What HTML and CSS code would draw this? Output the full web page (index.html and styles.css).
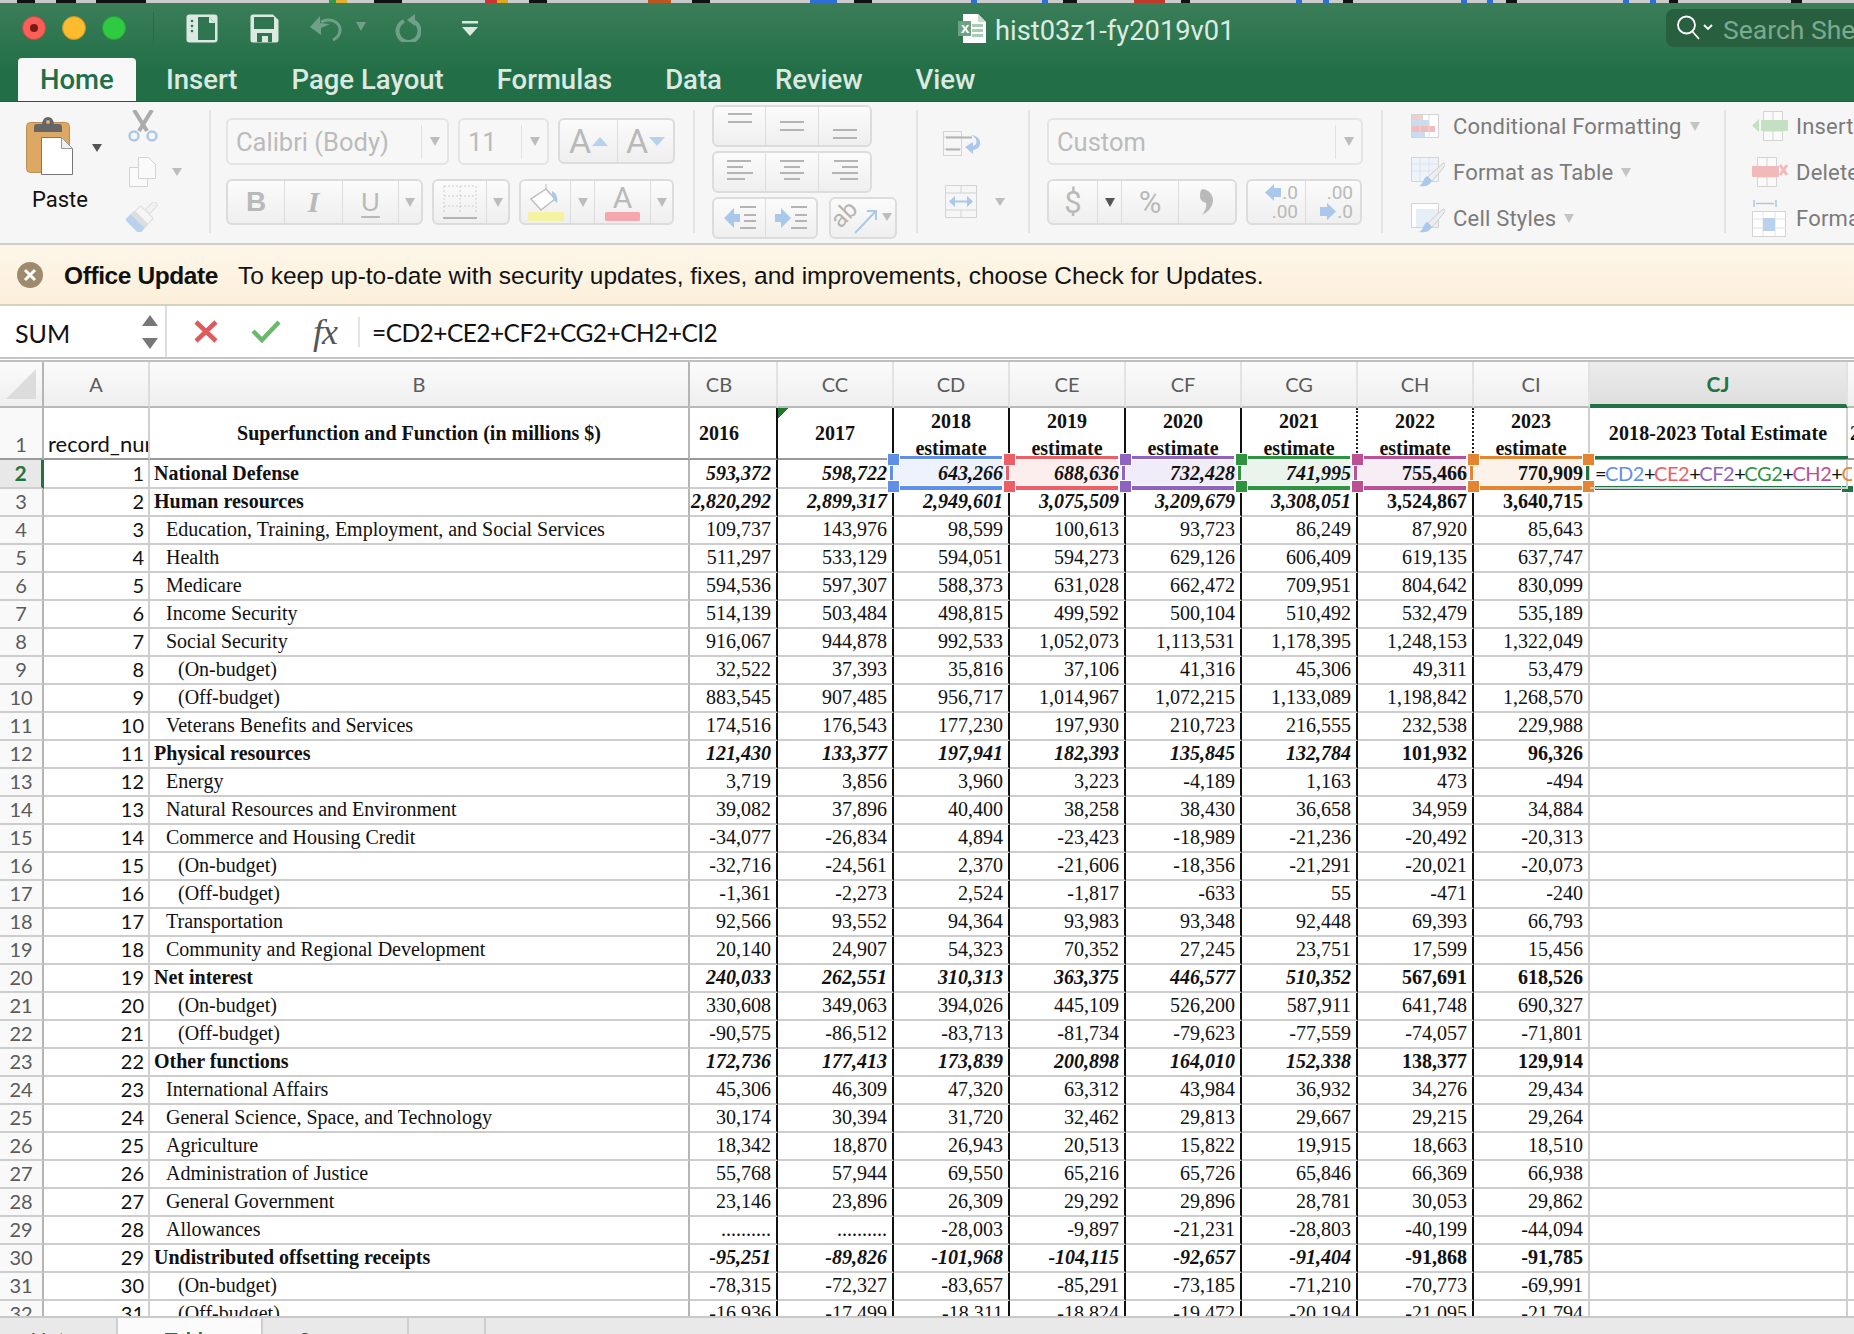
FILE: index.html
```html
<!DOCTYPE html>
<html lang="en">
<head>
<meta charset="utf-8">
<title>hist03z1-fy2019v01</title>
<link rel="stylesheet" href="styles.css">
</head>
<body>
<div class="strip"></div>
<header class="titlebar">
  <div class="toprow">
    <span class="light red"><i></i></span><span class="light yellow"></span><span class="light green"></span>
    <span class="qsep"></span>
    <svg class="q1" width="32" height="29" viewBox="0 0 32 29"><rect x="0.5" y="0.5" width="31" height="28" rx="3" fill="#dbe9e1"/><path d="M12 3h11l6 6v17H12z" fill="#2f7551"/><path d="M23 3v6h6" fill="#dbe9e1"/><circle cx="6" cy="7" r="1.3" fill="#2f7551"/><circle cx="6" cy="12" r="1.3" fill="#2f7551"/><circle cx="6" cy="17" r="1.3" fill="#2f7551"/></svg>
    <svg class="q2" width="29" height="29" viewBox="0 0 29 29"><path d="M3 0.5h20l5.500 5.500v20a2.500 2.500 0 0 1-2.500 2.500H3A2.500 2.500 0 0 1 .5 26V3A2.500 2.500 0 0 1 3 .5z" fill="#dbe9e1"/><rect x="4" y="3" width="20" height="12" fill="#2f7551"/><path d="M7 28v-9h15v9h-4v-6h-6v6z" fill="#2f7551"/></svg>
    <svg class="q3" width="56" height="26" viewBox="0 0 56 26"><path d="M0 12L10 1v7l10 1-9 4 0 7z" fill="#70a188"/><path d="M11 7c9-5 19 0 19 8 0 5-3 8-7 10" fill="none" stroke="#70a188" stroke-width="3"/><path d="M46 7h10l-5 9z" fill="#70a188"/></svg>
    <svg class="q4" width="26" height="28" viewBox="0 0 26 28"><path d="M9 7a11 11 0 1 0 9 0" fill="none" stroke="#70a188" stroke-width="4"/><path d="M20 0v12l-8-6z" fill="#70a188"/></svg>
    <svg class="q5" width="16" height="15" viewBox="0 0 16 15"><rect width="16" height="2.500" fill="#dbe9e1"/><path d="M0 6h16l-8 9z" fill="#dbe9e1"/></svg>
    <div class="doc">
      <svg width="28" height="29" viewBox="0 0 28 29"><path d="M5 0h15l8 8v21H5z" fill="#fff"/><path d="M20 0v8h8" fill="#c8dccf"/><path d="M14 10h11v3h-11zM14 15h11v3h-11zM14 20h11v3h-11z" fill="#a5cfb0"/><rect y="7" width="13" height="15" fill="#6f9f84"/><text x="3" y="19" class="xl">x</text></svg>
      <span class="docname">hist03z1-fy2019v01</span>
    </div>
    <div class="search">
      <svg width="36" height="26" viewBox="0 0 36 26"><circle cx="9.500" cy="10" r="8.500" fill="none" stroke="#fff" stroke-width="1.800"/><path d="M15 16l7 8M27 10l4 4 4-4" fill="none" stroke="#fff" stroke-width="1.800"/></svg>
      <span>Search Sheet</span>
    </div>
  </div>
  <nav class="tabs">
    <span class="tab on">Home</span><span class="tab t2">Insert</span><span class="tab t3">Page Layout</span><span class="tab t4">Formulas</span><span class="tab t5">Data</span><span class="tab t6">Review</span><span class="tab t7">View</span>
  </nav>
</header>

<section class="ribbon">
  <div class="g gclip">
    <div class="pastecol">
      <svg width="76" height="60" viewBox="0 0 76 60"><rect x=".5" y="6.500" width="43" height="50" rx="4" fill="#dca864" stroke="#bd8f52"/><path d="M8 16v-5q0-3 3-3h5q1-7 6-7t6 7h5q3 0 3 3v5z" fill="#666"/><circle cx="22" cy="6" r="2" fill="#d9b27a"/><path d="M15.500 21.500h20l11 11v26h-31z" fill="#fff" stroke="#777"/><path d="M35.500 21.500v11h11z" fill="#eee" stroke="#999"/><path d="M66 28h10l-5 8z" fill="#555"/></svg>
      <span class="pastelabel">Paste</span>
    </div>
    <div class="cliptools">
      <svg width="30" height="32" viewBox="0 0 30 32"><path d="M6 0l13 21M24 0L11 21" stroke="#ababab" stroke-width="4" fill="none"/><circle cx="6" cy="26" r="4.500" fill="none" stroke="#aac8e8" stroke-width="2.500"/><circle cx="24" cy="26" r="4.500" fill="none" stroke="#aac8e8" stroke-width="2.500"/></svg>
      <svg class="copy" width="56" height="30" viewBox="0 0 56 30"><path d="M.5 10.500h18v19H.500z" fill="#fafafa" stroke="#d3d3d3"/><path d="M9.500.500h10l7 7v14h-17z" fill="#fafafa" stroke="#d3d3d3"/><path d="M43 11h10l-5 8z" fill="#bdbdbd"/></svg>
      <svg class="brush" width="32" height="30" viewBox="0 0 32 30"><g transform="rotate(45 16 15)"><rect x="13" y="-5" width="6" height="13" rx="3" fill="#f1f1f1" stroke="#ddd"/><rect x="7" y="8" width="18" height="8" rx="1" fill="#f5f5f5" stroke="#ddd"/><path d="M6 16h20v5H6z" fill="#ddd"/><path d="M6 21h20v8H6z" fill="#b9d1ec"/></g></svg>
    </div>
  </div>
  <span class="sep"></span>
  <div class="g gfont">
    <div class="row">
      <div class="box combo w223"><span class="val">Calibri (Body)</span><span class="csep"></span><span class="car"></span></div>
      <div class="box combo w91"><span class="val">11</span><span class="csep"></span><span class="car"></span></div>
      <div class="box w117"><span class="cell c58"><span class="bigA">A</span><span class="tri up"></span></span><span class="cell grow"><span class="bigA">A</span><span class="tri dn"></span></span></div>
    </div>
    <div class="row r2">
      <div class="box w197"><span class="cell c59 tb">B</span><span class="cell c58 ti">I</span><span class="cell c56 tu">U</span><span class="cell grow"><span class="car"></span></span></div>
      <div class="box w78"><span class="cell c54"><svg width="36" height="36" viewBox="0 0 36 36"><path d="M2 2h32M2 12h32M2 22h32M2 2v26M18 2v26M34 2v26" fill="none" stroke="#cfcfcf" stroke-dasharray="2 2"/><path d="M1 34h34" stroke="#b4b4b4" stroke-width="2"/></svg></span><span class="cell grow"><span class="car"></span></span></div>
      <div class="box w155"><span class="cell c51"><svg width="36" height="38" viewBox="0 0 36 38"><path d="M18 6L3 16l10 11 14-11z" fill="#fff" stroke="#bdbdbd" stroke-width="1.500"/><path d="M18 6V1" stroke="#bdbdbd"/><path d="M24 8c5 2 6 8 5 12-3-2-4-5-5-7z" fill="#a9c8ea"/><rect x="0" y="29" width="36" height="9" rx="1.500" fill="#f4f3a2"/></svg></span><span class="cell c24"><span class="car"></span></span><span class="cell c56 colA">A<i></i></span><span class="cell grow"><span class="car"></span></span></div>
    </div>
  </div>
  <span class="sep"></span>
  <div class="g galign">
    <div class="box w160 h42">
      <span class="cell c53"><svg width="26" height="38" viewBox="0 0 26 38"><path d="M1 7h24M1 15h24" stroke="#b4b4b4" stroke-width="2"/></svg></span>
      <span class="cell c54"><svg width="26" height="38" viewBox="0 0 26 38"><path d="M1 15h24M1 23h24" stroke="#b4b4b4" stroke-width="2"/></svg></span>
      <span class="cell grow"><svg width="26" height="38" viewBox="0 0 26 38"><path d="M1 23h24M1 31h24" stroke="#b4b4b4" stroke-width="2"/></svg></span>
    </div>
    <div class="box w160 h42">
      <span class="cell c53"><svg width="26" height="26" viewBox="0 0 26 26"><path d="M0 2h24M0 8h16M0 14h26M0 20h18" stroke="#b4b4b4" stroke-width="2"/></svg></span>
      <span class="cell c54"><svg width="26" height="26" viewBox="0 0 26 26"><path d="M1 2h24M5 8h16M1 14h24M5 20h16" stroke="#b4b4b4" stroke-width="2"/></svg></span>
      <span class="cell grow"><svg width="26" height="26" viewBox="0 0 26 26"><path d="M2 2h24M10 8h16M0 14h26M8 20h18" stroke="#b4b4b4" stroke-width="2"/></svg></span>
    </div>
    <div class="alignrow">
      <div class="box w106 h42">
        <span class="cell c53"><svg width="32" height="26" viewBox="0 0 32 26"><path d="M0 13L10 3v6h6v8h-6v6z" fill="#a9c8ea"/><path d="M16 2h16M20 10h12M20 16h12M16 23h16" stroke="#b4b4b4" stroke-width="2"/></svg></span>
        <span class="cell grow"><svg width="32" height="26" viewBox="0 0 32 26"><path d="M16 13L6 3v6H0v8h6v6z" fill="#a9c8ea"/><path d="M16 2h16M20 10h12M20 16h12M16 23h16" stroke="#b4b4b4" stroke-width="2"/></svg></span>
      </div>
      <div class="box w68 h42">
        <span class="cell grow"><svg width="60" height="36" viewBox="0 0 60 36"><text x="0" y="24" class="ab" transform="rotate(-45 10 18)">ab</text><path d="M22 33L42 12M34 11h9v9" fill="none" stroke="#a9c8ea" stroke-width="2"/><path d="M49 13h10l-5 8z" fill="#bdbdbd"/></svg></span>
      </div>
    </div>
  </div>
  <span class="sep"></span>
  <div class="g gwrap">
    <svg width="40" height="25" viewBox="0 0 40 25"><path d="M.5.500h18v24H.500zM.5 6h18M.5 18h18" fill="none" stroke="#d3d3d3"/><path d="M3 6.500h26M3 18.500h14" stroke="#b4b4b4" stroke-width="2"/><path d="M28 4c12 1 12 14 2 15v4l-8-7 8-5v4c5-1 5-8-2-11z" fill="#a9c8ea"/></svg>
    <svg class="merge" width="62" height="33" viewBox="0 0 62 33"><path d="M.5.500h31v32H.500zM.5 8h31M.5 25h31M16 .5V8M16 25v8" fill="none" stroke="#d3d3d3"/><path d="M5 16.500h22" stroke="#a9c8ea" stroke-width="2"/><path d="M10 11l-6 5.500 6 5.500zM22 11l6 5.500-6 5.500z" fill="#a9c8ea"/><path d="M50 13h10l-5 8z" fill="#bdbdbd"/></svg>
  </div>
  <span class="sep"></span>
  <div class="g gnum">
    <div class="box combo w316"><span class="val">Custom</span><span class="csep"></span><span class="car"></span></div>
    <div class="row r2">
      <div class="box w190"><span class="cell c50 sym">$</span><span class="cell c24"><span class="car dark"></span></span><span class="cell c57 sym">%</span><span class="cell grow"><svg width="14" height="26" viewBox="0 0 14 26"><path d="M3 0c6 1 10 6 10 11 0 7-5 12-11 15 3-4 5-8 4-12-1-1-6-1-6-7C0 3 1 0 3 0z" fill="#b9b9b9"/></svg></span></div>
      <div class="box w116">
        <span class="cell c58 dec"><span class="decl"><svg width="16" height="17" viewBox="0 0 16 17"><path d="M0 8.500L9 0v4h7v9H9v4z" fill="#a9c8ea"/></svg>.0</span><span class="decl rt">.00</span></span>
        <span class="cell grow dec"><span class="decl rt">.00</span><span class="decl"><svg width="16" height="17" viewBox="0 0 16 17"><path d="M16 8.500L7 0v4H0v9h7v4z" fill="#a9c8ea"/></svg>.0</span></span>
      </div>
    </div>
  </div>
  <span class="sep"></span>
  <div class="g gstyles">
    <div class="srow"><span class="sicon"><svg width="28" height="24" viewBox="0 0 28 24"><path d="M.5.500h27v23H.500z" fill="#fff" stroke="#d3d3d3"/><path d="M1 1h11v5H1z" fill="#f4cbcb"/><path d="M1 6h17v6H1z" fill="#c6dcf2"/><path d="M1 12h23v6H1z" fill="#f2bcbc"/><path d="M1 18h13v5H1z" fill="#c6dcf2"/><path d="M9 1v22M18 1v22" stroke="#ddd"/></svg></span><span>Conditional Formatting</span><span class="car lg"></span></div>
    <div class="srow"><span class="sicon"><svg width="34" height="30" viewBox="0 0 34 30"><path d="M.5.500h27v24H.500z" fill="#eef3fa" stroke="#d3d3d3"/><path d="M1 7h26M1 14h26M9 1v23M18 1v23" stroke="#dbe3ee"/><path d="M32 6c2 0 2 2 1 4L21 24l-4-4z" fill="#eee" stroke="#ccc"/><path d="M16 19l5 5c-3 5-8 6-13 5 4-1 4-8 8-10z" fill="#a9c8ea"/></svg></span><span>Format as Table</span><span class="car lg"></span></div>
    <div class="srow"><span class="sicon"><svg width="34" height="30" viewBox="0 0 34 30"><path d="M.5.500h27v24H.500z" fill="#fff" stroke="#d3d3d3"/><path d="M5 6h22v18H5z" fill="#e6eef8"/><path d="M32 6c2 0 2 2 1 4L21 24l-4-4z" fill="#eee" stroke="#ccc"/><path d="M16 19l5 5c-3 5-8 6-13 5 4-1 4-8 8-10z" fill="#a9c8ea"/></svg></span><span>Cell Styles</span><span class="car lg"></span></div>
  </div>
  <span class="sep"></span>
  <div class="g gcells">
    <div class="srow"><span class="sicon ci"><svg width="36" height="30" viewBox="0 0 36 30"><path d="M11.500.500h19v29h-19zM11.500 20h19M21 20v10M21 0v10" fill="#fafafa" stroke="#d3d3d3"/><rect x="9" y="9" width="27" height="11" rx="1" fill="#c3e0c3"/><path d="M0 14.500L7 8v13z" fill="#c3e0c3"/></svg></span><span>Insert</span></div>
    <div class="srow"><span class="sicon ci"><svg width="36" height="30" viewBox="0 0 36 30"><path d="M5.500.500h19v29h-19zM5.500 20h19M15 20v10M15 0v10" fill="#fafafa" stroke="#d3d3d3"/><rect y="9" width="27" height="11" rx="1" fill="#f2b9bb"/><path d="M28 8l7 10M35 8l-7 10" stroke="#f2b9bb" stroke-width="3"/></svg></span><span>Delete</span></div>
    <div class="srow"><span class="sicon ci"><svg width="36" height="38" viewBox="0 0 36 38"><path d="M2 1v7M24 1v7M4 4.500h18" stroke="#aac8e8" stroke-width="1.500" fill="none"/><path d="M.5 12.500h33v25H.500z" fill="#fff" stroke="#d3d3d3"/><path d="M1 20h33M1 29h33M11 13v24M23 13v24" stroke="#e2e2e2"/><rect x="11" y="19" width="12" height="13" fill="#b9d1ec"/></svg></span><span>Format</span></div>
  </div>
</section>

<section class="update">
  <svg width="26" height="26" viewBox="0 0 26 26"><circle cx="13" cy="13" r="13" fill="#9f8a6e"/><path d="M8 8l10 10M18 8L8 18" stroke="#fff" stroke-width="3"/></svg>
  <strong>Office Update</strong>
  <span>To keep up-to-date with security updates, fixes, and improvements, choose Check for Updates.</span>
</section>

<section class="fbar">
  <div class="namebox"><span>SUM</span><svg width="16" height="34" viewBox="0 0 16 34"><path d="M8 0l8 11H0zM8 34l8-11H0z" fill="#777"/></svg></div>
  <svg class="fx1" width="24" height="23" viewBox="0 0 24 23"><path d="M2 2l20 19M22 2L2 21" stroke="#df5a5c" stroke-width="4.500"/></svg>
  <svg class="fx2" width="30" height="23" viewBox="0 0 30 23"><path d="M2 11l9 9L28 2" fill="none" stroke="#6ab96c" stroke-width="4.500"/></svg>
  <span class="fx">fx</span>
  <span class="fsep"></span>
  <span class="ftext">=CD2+CE2+CF2+CG2+CH2+CI2</span>
</section>

<section class="sheet">
<table class="grid">
<colgroup><col class="c-rh"><col class="c-a"><col class="c-b"><col class="c-cb"><col class="c-n"><col class="c-n"><col class="c-n"><col class="c-n"><col class="c-n"><col class="c-n"><col class="c-n"><col class="c-cj"><col class="c-x"></colgroup>
<thead>
<tr><th class="corner"><svg width="30" height="30" viewBox="0 0 30 30"><path d="M30 0v30H0z" fill="#dcdcdc"/></svg></th><th>A</th><th>B</th><th class="off">CB</th><th>CC</th><th>CD</th><th>CE</th><th>CF</th><th>CG</th><th>CH</th><th>CI</th><th class="cursor">CJ</th><th></th></tr>
</thead>
<tbody>
<tr class="head"><td class="rh">1</td><td class="cal">record_number</td><td class="mid">Superfunction and Function (in millions $)</td><td class="mid off">2016</td><td class="mid flag">2017</td><td class="est"><div>2018<br>estimate</div></td><td class="est"><div>2019<br>estimate</div></td><td class="est"><div>2020<br>estimate</div></td><td class="est dotted"><div>2021<br>estimate</div></td><td class="est dotted"><div>2022<br>estimate</div></td><td class="est"><div>2023<br>estimate</div></td><td class="mid wide">2018-2023 Total Estimate</td><td class="mid nx">2</td></tr>
<tr class="tot sel"><td class="rh cur">2</td><td class="cal">1</td><td class="lab">National Defense</td><td>593,372</td><td>598,722</td><td>643,266</td><td>688,636</td><td>732,428</td><td>741,995</td><td>755,466</td><td>770,909</td><td class="f"><div><b>=</b><span class="k1">CD2</span><b>+</b><span class="k2">CE2</span><b>+</b><span class="k3">CF2</span><b>+</b><span class="k4">CG2</span><b>+</b><span class="k5">CH2</span><b>+</b><span class="k6">CI2</span></div></td><td></td></tr>
<tr class="tot"><td class="rh">3</td><td class="cal">2</td><td class="lab">Human resources</td><td>2,820,292</td><td>2,899,317</td><td>2,949,601</td><td>3,075,509</td><td>3,209,679</td><td>3,308,051</td><td>3,524,867</td><td>3,640,715</td><td></td><td></td></tr>
<tr><td class="rh">4</td><td class="cal">3</td><td class="lab l1">Education, Training, Employment, and Social Services</td><td>109,737</td><td>143,976</td><td>98,599</td><td>100,613</td><td>93,723</td><td>86,249</td><td>87,920</td><td>85,643</td><td></td><td></td></tr>
<tr><td class="rh">5</td><td class="cal">4</td><td class="lab l1">Health</td><td>511,297</td><td>533,129</td><td>594,051</td><td>594,273</td><td>629,126</td><td>606,409</td><td>619,135</td><td>637,747</td><td></td><td></td></tr>
<tr><td class="rh">6</td><td class="cal">5</td><td class="lab l1">Medicare</td><td>594,536</td><td>597,307</td><td>588,373</td><td>631,028</td><td>662,472</td><td>709,951</td><td>804,642</td><td>830,099</td><td></td><td></td></tr>
<tr><td class="rh">7</td><td class="cal">6</td><td class="lab l1">Income Security</td><td>514,139</td><td>503,484</td><td>498,815</td><td>499,592</td><td>500,104</td><td>510,492</td><td>532,479</td><td>535,189</td><td></td><td></td></tr>
<tr><td class="rh">8</td><td class="cal">7</td><td class="lab l1">Social Security</td><td>916,067</td><td>944,878</td><td>992,533</td><td>1,052,073</td><td>1,113,531</td><td>1,178,395</td><td>1,248,153</td><td>1,322,049</td><td></td><td></td></tr>
<tr><td class="rh">9</td><td class="cal">8</td><td class="lab l2">(On-budget)</td><td>32,522</td><td>37,393</td><td>35,816</td><td>37,106</td><td>41,316</td><td>45,306</td><td>49,311</td><td>53,479</td><td></td><td></td></tr>
<tr><td class="rh">10</td><td class="cal">9</td><td class="lab l2">(Off-budget)</td><td>883,545</td><td>907,485</td><td>956,717</td><td>1,014,967</td><td>1,072,215</td><td>1,133,089</td><td>1,198,842</td><td>1,268,570</td><td></td><td></td></tr>
<tr><td class="rh">11</td><td class="cal">10</td><td class="lab l1">Veterans Benefits and Services</td><td>174,516</td><td>176,543</td><td>177,230</td><td>197,930</td><td>210,723</td><td>216,555</td><td>232,538</td><td>229,988</td><td></td><td></td></tr>
<tr class="tot"><td class="rh">12</td><td class="cal">11</td><td class="lab">Physical resources</td><td>121,430</td><td>133,377</td><td>197,941</td><td>182,393</td><td>135,845</td><td>132,784</td><td>101,932</td><td>96,326</td><td></td><td></td></tr>
<tr><td class="rh">13</td><td class="cal">12</td><td class="lab l1">Energy</td><td>3,719</td><td>3,856</td><td>3,960</td><td>3,223</td><td>-4,189</td><td>1,163</td><td>473</td><td>-494</td><td></td><td></td></tr>
<tr><td class="rh">14</td><td class="cal">13</td><td class="lab l1">Natural Resources and Environment</td><td>39,082</td><td>37,896</td><td>40,400</td><td>38,258</td><td>38,430</td><td>36,658</td><td>34,959</td><td>34,884</td><td></td><td></td></tr>
<tr><td class="rh">15</td><td class="cal">14</td><td class="lab l1">Commerce and Housing Credit</td><td>-34,077</td><td>-26,834</td><td>4,894</td><td>-23,423</td><td>-18,989</td><td>-21,236</td><td>-20,492</td><td>-20,313</td><td></td><td></td></tr>
<tr><td class="rh">16</td><td class="cal">15</td><td class="lab l2">(On-budget)</td><td>-32,716</td><td>-24,561</td><td>2,370</td><td>-21,606</td><td>-18,356</td><td>-21,291</td><td>-20,021</td><td>-20,073</td><td></td><td></td></tr>
<tr><td class="rh">17</td><td class="cal">16</td><td class="lab l2">(Off-budget)</td><td>-1,361</td><td>-2,273</td><td>2,524</td><td>-1,817</td><td>-633</td><td>55</td><td>-471</td><td>-240</td><td></td><td></td></tr>
<tr><td class="rh">18</td><td class="cal">17</td><td class="lab l1">Transportation</td><td>92,566</td><td>93,552</td><td>94,364</td><td>93,983</td><td>93,348</td><td>92,448</td><td>69,393</td><td>66,793</td><td></td><td></td></tr>
<tr><td class="rh">19</td><td class="cal">18</td><td class="lab l1">Community and Regional Development</td><td>20,140</td><td>24,907</td><td>54,323</td><td>70,352</td><td>27,245</td><td>23,751</td><td>17,599</td><td>15,456</td><td></td><td></td></tr>
<tr class="tot"><td class="rh">20</td><td class="cal">19</td><td class="lab">Net interest</td><td>240,033</td><td>262,551</td><td>310,313</td><td>363,375</td><td>446,577</td><td>510,352</td><td>567,691</td><td>618,526</td><td></td><td></td></tr>
<tr><td class="rh">21</td><td class="cal">20</td><td class="lab l2">(On-budget)</td><td>330,608</td><td>349,063</td><td>394,026</td><td>445,109</td><td>526,200</td><td>587,911</td><td>641,748</td><td>690,327</td><td></td><td></td></tr>
<tr><td class="rh">22</td><td class="cal">21</td><td class="lab l2">(Off-budget)</td><td>-90,575</td><td>-86,512</td><td>-83,713</td><td>-81,734</td><td>-79,623</td><td>-77,559</td><td>-74,057</td><td>-71,801</td><td></td><td></td></tr>
<tr class="tot"><td class="rh">23</td><td class="cal">22</td><td class="lab">Other functions</td><td>172,736</td><td>177,413</td><td>173,839</td><td>200,898</td><td>164,010</td><td>152,338</td><td>138,377</td><td>129,914</td><td></td><td></td></tr>
<tr><td class="rh">24</td><td class="cal">23</td><td class="lab l1">International Affairs</td><td>45,306</td><td>46,309</td><td>47,320</td><td>63,312</td><td>43,984</td><td>36,932</td><td>34,276</td><td>29,434</td><td></td><td></td></tr>
<tr><td class="rh">25</td><td class="cal">24</td><td class="lab l1">General Science, Space, and Technology</td><td>30,174</td><td>30,394</td><td>31,720</td><td>32,462</td><td>29,813</td><td>29,667</td><td>29,215</td><td>29,264</td><td></td><td></td></tr>
<tr><td class="rh">26</td><td class="cal">25</td><td class="lab l1">Agriculture</td><td>18,342</td><td>18,870</td><td>26,943</td><td>20,513</td><td>15,822</td><td>19,915</td><td>18,663</td><td>18,510</td><td></td><td></td></tr>
<tr><td class="rh">27</td><td class="cal">26</td><td class="lab l1">Administration of Justice</td><td>55,768</td><td>57,944</td><td>69,550</td><td>65,216</td><td>65,726</td><td>65,846</td><td>66,369</td><td>66,938</td><td></td><td></td></tr>
<tr><td class="rh">28</td><td class="cal">27</td><td class="lab l1">General Government</td><td>23,146</td><td>23,896</td><td>26,309</td><td>29,292</td><td>29,896</td><td>28,781</td><td>30,053</td><td>29,862</td><td></td><td></td></tr>
<tr><td class="rh">29</td><td class="cal">28</td><td class="lab l1">Allowances</td><td>..........</td><td>..........</td><td>-28,003</td><td>-9,897</td><td>-21,231</td><td>-28,803</td><td>-40,199</td><td>-44,094</td><td></td><td></td></tr>
<tr class="tot"><td class="rh">30</td><td class="cal">29</td><td class="lab">Undistributed offsetting receipts</td><td>-95,251</td><td>-89,826</td><td>-101,968</td><td>-104,115</td><td>-92,657</td><td>-91,404</td><td>-91,868</td><td>-91,785</td><td></td><td></td></tr>
<tr><td class="rh">31</td><td class="cal">30</td><td class="lab l2">(On-budget)</td><td>-78,315</td><td>-72,327</td><td>-83,657</td><td>-85,291</td><td>-73,185</td><td>-71,210</td><td>-70,773</td><td>-69,991</td><td></td><td></td></tr>
<tr><td class="rh">32</td><td class="cal">31</td><td class="lab l2">(Off-budget)</td><td>-16,936</td><td>-17,499</td><td>-18,311</td><td>-18,824</td><td>-19,472</td><td>-20,194</td><td>-21,095</td><td>-21,794</td><td></td><td></td></tr>
</tbody>
</table>
<div class="hl h1"><i class="tl"></i><i class="tr"></i><i class="bl"></i><i class="br"></i></div>
<div class="hl h2"><i class="tl"></i><i class="tr"></i><i class="bl"></i><i class="br"></i></div>
<div class="hl h3"><i class="tl"></i><i class="tr"></i><i class="bl"></i><i class="br"></i></div>
<div class="hl h4"><i class="tl"></i><i class="tr"></i><i class="bl"></i><i class="br"></i></div>
<div class="hl h5"><i class="tl"></i><i class="tr"></i><i class="bl"></i><i class="br"></i></div>
<div class="hl h6"><i class="tl"></i><i class="tr"></i><i class="bl"></i><i class="br"></i></div>
<div class="selbox"><i></i></div>
</section>

<footer class="sheettabs">
  <span class="st s1">Notes</span><span class="st s2 active">Table</span><span class="st s3">Sources</span><span class="st s4">+</span>
</footer>
</body>
</html>
```
FILE: styles.css
```css
*{box-sizing:border-box}
html,body{margin:0;padding:0;width:1854px;height:1334px;overflow:hidden;background:#fff}
body{font-family:Roboto,"Liberation Sans",sans-serif;color:#000}

.strip{height:3px;background:linear-gradient(90deg,#c8c8c8 17px,#111 17px 35px,#c8c8c8 35px 56px,#111 56px 76px,#c8c8c8 76px 96px,#111 96px 146px,#ccc 146px 329px,#2e9a44 329px 336px,#e0b030 336px 347px,#ccc 347px 374px,#111 374px 402px,#c8c8c8 402px 485px,#c33 485px 497px,#dca820 497px 508px,#ccc 508px 529px,#111 529px 547px,#c8c8c8 547px 648px,#b52 648px 671px,#c8c8c8 671px 692px,#111 692px 710px,#ccc 710px 810px,#2d6fd6 810px 837px,#ccc 837px 854px,#111 854px 872px,#ccc 872px 971px,#2d6fd6 971px 977px,#ccc 977px 1042px,#2d6fd6 1042px 1048px,#ccc 1048px 1063px,#111 1063px 1077px,#ccc 1077px 1134px,#c0392b 1134px 1165px,#ccc 1165px 1181px,#111 1181px 1190px,#ccc 1190px 1296px,#2d6fd6 1296px 1302px,#ccc 1302px 1323px,#2d6fd6 1323px 1329px,#ccc 1329px 1343px,#111 1343px 1353px,#ccc 1353px 1461px,#2d6fd6 1461px 1467px,#ccc 1467px 1487px,#2d6fd6 1487px 1493px,#ccc 1493px 1506px,#111 1506px 1517px,#ccc 1517px 1623px,#2d6fd6 1623px 1629px,#ccc 1629px 1650px,#2d6fd6 1650px 1656px,#ccc 1656px 1669px,#111 1669px 1678px,#ccc 1678px 1791px,#111 1791px 1802px,#ccc 1802px)}

.titlebar{height:99px;background:linear-gradient(#3a7e58,#226f47 70%);border-bottom:1px solid #1b5c3b;overflow:hidden}
.toprow{height:50px;margin-bottom:5px;display:flex;align-items:center;padding-left:22px}
.light{width:24px;height:24px;border-radius:50%;margin-right:16px;display:flex;align-items:center;justify-content:center;flex:none}
.red{background:#fc5f57;border:1px solid #c14b44}
.red i{width:8px;height:8px;border-radius:50%;background:#7a1a14}
.yellow{background:#fdbc2e;border:1px solid #c7922e}
.green{background:#2ecb42;border:1px solid #2aa23b}
.qsep{width:1px;height:32px;background:#2b6a48;margin:0 32px 0 11px;flex:none}
.q1{flex:none}
.q2{margin-left:32px;flex:none}
.q3{margin-left:31px;flex:none}
.q4{margin-left:29px;flex:none}
.q5{margin-left:41px;flex:none}
.xl{font:bold 15px "Liberation Sans",sans-serif;fill:#fff}
.doc{margin-left:480px;width:708px;display:flex;align-items:center;flex:none}
.docname{margin:5px 0 0 9px;font-size:27.300px;color:#dcebe2;white-space:nowrap}
.search{flex:1;min-width:0;height:38px;background:#28603f;border-radius:8px 0 0 8px;display:flex;align-items:center;padding-left:11px;white-space:nowrap;overflow:hidden}
.search svg{flex:none}
.search span{flex:none;margin:2px 0 0 10px;font-size:26.500px;color:#7ea991}

.tabs{height:44px;display:flex;align-items:flex-start}
.tab{font-size:27.500px;font-weight:500;color:#dce9e1;line-height:43px;white-space:nowrap;flex:none}
.tab.on{margin-left:18px;width:118px;height:44px;padding-left:22px;background:#f8f8f8;color:#226f47;border-radius:4px 4px 0 0}
.t2{margin-left:30px}
.t3{margin-left:54px}
.t4{margin-left:53px}
.t5{margin-left:53px}
.t6{margin-left:53px}
.t7{margin-left:53px}

.ribbon{height:143px;background:#f6f6f6;border-bottom:2px solid #cfcfcf;display:flex;align-items:flex-start;overflow:hidden}
.sep{flex:none;width:2px;height:123px;margin-top:8px;background:#e3e3e3}
.g{flex:none;height:141px}
.gclip{width:209px;padding:14px 0 0 26px;display:flex}
.pastecol{width:76px;display:flex;flex-direction:column}
.pastelabel{margin:12px 0 0 6px;font-size:22px;line-height:24px;color:#111}
.cliptools{margin:-6px 0 0 26px;display:flex;flex-direction:column;align-items:flex-start}
.copy{margin:15px 0 0 1px}
.brush{margin:15px 0 0 -2px}
.gfont{width:482px;padding:16px 0 0 15px}
.row{display:flex;gap:9px}
.r2{margin-top:14px}
.box{display:flex;height:46px;border:2px solid #dcdcdc;border-radius:6px;background:linear-gradient(#fbfbfb,#efefef);flex:none;align-items:stretch}
.combo{background:#f7f7f7;border-color:#e4e4e4;height:47px;align-items:center;color:#bbb;padding-left:8px;font-size:25.500px}
.combo .car{margin-right:7px}
.val{flex:1;white-space:nowrap}
.csep{width:1px;height:34px;background:#e2e2e2;margin-right:8px}
.w223{width:223px}.w91{width:91px}.w117{width:117px}.w197{width:197px}.w78{width:78px}.w155{width:155px}
.w160{width:160px}.w106{width:106px}.w68{width:68px}.w316{width:316px}.w190{width:190px}.w116{width:116px}
.h42{height:42px}
.cell{display:flex;align-items:center;justify-content:center;border-right:1px solid #dcdcdc;flex:none;color:#b9b9b9}
.grow{flex:1;border-right:0;min-width:0}
.c24{width:24px}.c50{width:49px}.c51{width:50px}.c53{width:52px}.c54{width:53px}.c56{width:56px}.c57{width:57px}.c58{width:58px}.c59{width:57px}
.car{display:inline-block;width:0;height:0;border-left:5.500px solid transparent;border-right:5.500px solid transparent;border-top:9px solid #bdbdbd;flex:none}
.car.dark{border-top-color:#555}
.car.lg{margin-left:8px;border-top-color:#c4c4c4}
.bigA{font-size:34px;line-height:34px;color:#b9b9b9}
.tri{width:0;height:0;border-left:8px solid transparent;border-right:8px solid transparent;margin-left:1px}
.up{border-bottom:9px solid #b7d2ee}
.dn{border-top:9px solid #b7d2ee}
.tb{font:bold 28px "Liberation Sans",sans-serif}
.ti{font:italic bold 30px "Liberation Serif",serif}
.tu{font:26px "Liberation Sans",sans-serif;text-decoration:underline;text-underline-offset:5px}
.colA{font-size:30px;flex-direction:column;line-height:28px;color:#b9b9b9}
.colA i{display:block;width:35px;height:9px;background:#f4a7ad;border-radius:1.500px}
.galign{width:221px;padding:3px 0 0 17px;display:flex;flex-direction:column;gap:4px}
.alignrow{display:flex;gap:11px}
.ab{font:24px Roboto,sans-serif;fill:#b4b4b4}
.gwrap{width:110px;padding:29px 0 0 25px;display:flex;flex-direction:column;align-items:flex-start;gap:29px}
.merge{margin-left:2px}
.gnum{width:351px;padding:16px 0 0 17px}
.sym{font-size:31px;font-weight:400}
.dec{flex-direction:column;font-size:19px;line-height:19px;align-items:stretch;padding:0 7px}
.decl{display:flex;align-items:center;justify-content:flex-end;gap:1px}
.gstyles{width:341px;padding:1px 0 0 28px}
.gcells{flex:1;padding:1px 0 0 26px;min-width:0;overflow:hidden}
.srow{height:46px;display:flex;align-items:center;font-size:22px;color:#7b7b7b;white-space:nowrap;letter-spacing:.2px}
.sicon{width:42px;flex:none;display:flex;align-items:center}
.ci{width:44px}

.update{height:61px;background:linear-gradient(#fdf6e8,#fcf0db);border-bottom:2px solid #d8cfbf;display:flex;align-items:center;padding:0 0 0 17px;font-family:"Liberation Sans",sans-serif;font-size:24.500px;white-space:nowrap;color:#111}
.update strong{margin:2px 0 0 21px;font-weight:700;letter-spacing:-.4px}
.update span{margin:2px 0 0 20px;letter-spacing:-.03px}

.fbar{height:53px;margin-bottom:1px;background:#fff;border-bottom:2px solid #c6c6c6;display:flex;align-items:center}
.namebox{width:167px;height:51px;border-right:2px solid #ddd;display:flex;align-items:center;padding-left:15px;font:25px Lato,sans-serif;color:#111;flex:none;background:#fff}
.namebox span{flex:1;padding-top:3px}
.namebox svg{margin-right:7px}
.fx1{margin-left:27px;flex:none}
.fx2{margin-left:33px;flex:none}
.fx{margin-left:32px;width:32px;font:italic 36px "Liberation Serif",serif;color:#555;flex:none;letter-spacing:-1px}
.fsep{width:2px;height:30px;background:#e4e4e4;margin-left:13px;flex:none}
.ftext{margin:1px 0 0 12px;font:24.500px Lato,sans-serif;letter-spacing:-.55px;color:#111;white-space:nowrap}

.sheet{position:relative;height:956px;border-top:2px solid #bfbfbf;overflow:hidden}
.grid{border-collapse:separate;border-spacing:0;table-layout:fixed;width:1980px;font:20px/24px "Liberation Serif",serif;color:#111}
.c-rh{width:44px}.c-a{width:106px}.c-b{width:540px}.c-cb{width:88px}.c-n{width:116px}.c-cj{width:258px}.c-x{width:132px}
.grid th{height:46px;padding:0;font:20px Lato,sans-serif;color:#5b5b5b;background:linear-gradient(#fbfbfb,#efefef);border-right:2px solid #e2e2e2;border-bottom:2px solid #b9b9b9;text-align:center}
.grid th.corner{padding:0 0 0 6px;text-align:left;line-height:0;border-right-color:#b5b5b5}
.grid th:nth-child(2){border-right-color:#dcdcdc}
.grid th:nth-child(3){border-right-color:#b5b5b5}
.grid th.off{padding-right:28px}
.grid th.cursor{color:#217346;font-weight:700;background:linear-gradient(#ececec,#dedede);border-bottom:4px solid #217346;font-size:21px}
.grid td{height:28px;padding:0 5px 2px 0;text-align:right;white-space:nowrap;overflow:hidden;border-right:2px solid #d0d0d0;border-bottom:2px solid #cdcdcd}
.grid td:nth-child(3){border-right-color:#b5b5b5}
.grid td:nth-child(n+4):nth-child(-n+10){border-right-color:#111}
.grid td:nth-child(12){border-right-color:#d0d0d0}
.grid td:last-child{border-right:0}
.grid td.rh{padding:0 0 2px;text-align:center;font:20px Lato,sans-serif;color:#5b5b5b;background:#f9f9f9;border-right-color:#b5b5b5}
.grid td.cal{font:20px Lato,sans-serif;padding-right:4px;color:#111}
.grid td.lab{text-align:left;padding:0 0 2px 4px}
.grid td.l1{padding-left:16px}
.grid td.l2{padding-left:28px}
.tot td{font-weight:700;font-style:italic}
.tot td.rh,.tot td.cal{font-weight:400;font-style:normal}
.tot td.lab{font-style:normal}
.tot td:nth-child(10),.tot td:nth-child(11){font-style:normal}
.head td{height:52px;font-weight:700;border-bottom:2px solid #999;padding:0;text-align:center;overflow:hidden}
.head td.rh{vertical-align:bottom;font-weight:400;padding-bottom:2px}
.head td.cal{text-align:left;padding:0 0 0 4px;vertical-align:bottom;font-weight:400;font-size:22px;line-height:28px}
.head td.mid{vertical-align:middle}
.head td.off{padding-right:28px}
.head td.flag{background:linear-gradient(135deg,#1d7a2b 50%,transparent 50%) no-repeat 0 0/11px 11px}
.head td.wide{letter-spacing:.12px}
.head td.nx{text-align:left;padding-left:2px}
.head td.est{vertical-align:top;overflow:visible;line-height:26.500px}
.head td.est div{height:50px}
.grid .head td.dotted{border-right:2px dotted #222}
.grid td.rh.cur{color:#217346;font-weight:700;font-size:21px;background:#e8e8e8;border-right:3px solid #217346}
.sel td:nth-child(6){background:#edf2fc}
.sel td:nth-child(7){background:#fdeeee}
.sel td:nth-child(8){background:#f1edf8}
.sel td:nth-child(9){background:#eaf4ec}
.sel td:nth-child(10){background:#f7edf4}
.sel td:nth-child(11){background:#fcf2e9}
.grid td.f{overflow:visible;text-align:left;padding:0 0 2px 5px;font:normal 400 20px Lato,sans-serif;letter-spacing:-.45px;position:relative;z-index:3}
.f div{width:257px;overflow:hidden}
.f b{font-weight:400;color:#111;letter-spacing:-1.5px}
.k1{color:#5f8fe8}.k2{color:#ec5f67}.k3{color:#8f63c2}.k4{color:#2f9440}.k5{color:#bd4f94}.k6{color:#e58532}

.hl{position:absolute;top:94px;height:34px;width:119px;border:3px solid currentColor;border-bottom-width:4px;box-shadow:inset 0 0 0 1px #fff;pointer-events:none}
.hl i{position:absolute;width:11px;height:11px;background:currentColor;outline:1px solid #fff;z-index:2}
.tl{top:-5px;left:-5px}.tr{top:-5px;right:-8px}.bl{bottom:-6px;left:-5px}.br{bottom:-6px;right:-8px}
.h1{left:890px;color:#5f8fe8}
.h2{left:1006px;color:#ec5f67}
.h3{left:1122px;color:#8f63c2}
.h4{left:1238px;color:#2f9440}
.h5{left:1354px;color:#bd4f94}
.h6{left:1470px;color:#e58532}
.selbox{position:absolute;top:94px;left:1586px;width:262px;height:34px;border:3px solid #217346;border-bottom-width:4px;border-right:0;z-index:1}
.selbox i{position:absolute;right:-5px;bottom:-6px;width:11px;height:6px;background:#217346;outline:1px solid #fff}

.sheettabs{height:18px;background:#e9e9e9;border-top:2px solid #c9c9c9;display:flex;overflow:hidden;font:21px Lato,sans-serif;color:#444}
.st{flex:none;text-align:center;border-right:2px solid #cfcfcf;padding-top:9px;line-height:26px;height:40px}
.s1{width:118px}
.s2.active{width:145px;background:#fbfbfb;color:#217346;font-weight:700;margin-top:-2px;padding-top:11px}
.s3{width:146px}
.s4{width:77px}
```
